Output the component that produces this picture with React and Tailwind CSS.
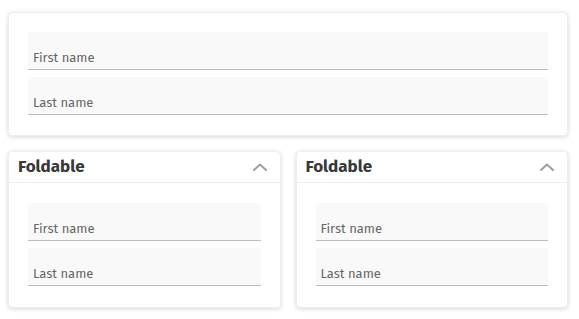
import React from "react";

const font = { fontFamily: '"Fira Sans", Lato, "Open Sans", sans-serif' };

function Field({ label }) {
  return (
    <div className="h-[38px] bg-[#f9f9f9] rounded-t-[4px] border-b border-[#bdbdbd] flex items-end px-[5px] pb-[3px]">
      <span className="text-[13px] leading-[16px] text-[#666666]">{label}</span>
    </div>
  );
}

function Fields() {
  return (
    <div className="flex flex-col gap-[7px]">
      <Field label="First name" />
      <Field label="Last name" />
    </div>
  );
}

function Chevron() {
  return (
    <svg width="14" height="8" viewBox="0 0 14 8" fill="none">
      <path d="M1 7L7 1.5L13 7" stroke="#9e9e9e" strokeWidth="2" strokeLinecap="round" strokeLinejoin="round" />
    </svg>
  );
}

function Foldable() {
  return (
    <div className="bg-white rounded-[4px] border border-[#eeeeee] shadow-[0_1px_4px_rgba(0,0,0,0.16)]">
      <div className="h-[31px] flex items-center justify-between pl-[9px] pr-[13px] border-b border-[#eeeeee]">
        <span className="text-[17px] font-bold text-[#383838]">Foldable</span>
        <Chevron />
      </div>
      <div className="px-[19px] pt-[20px] pb-[21px]">
        <Fields />
      </div>
    </div>
  );
}

export default function App() {
  return (
    <div className="bg-white w-[579px] h-[319px]" style={font}>
      <div className="w-[560px] ml-2 pt-3 flex flex-col gap-[15px]">
        <div className="bg-white rounded-[4px] border border-[#eeeeee] shadow-[0_1px_4px_rgba(0,0,0,0.16)] px-[19px] pt-[19px] pb-[20px]">
          <Fields />
        </div>
        <div className="grid grid-cols-2 gap-[15px]">
          <Foldable />
          <Foldable />
        </div>
      </div>
    </div>
  );
}
